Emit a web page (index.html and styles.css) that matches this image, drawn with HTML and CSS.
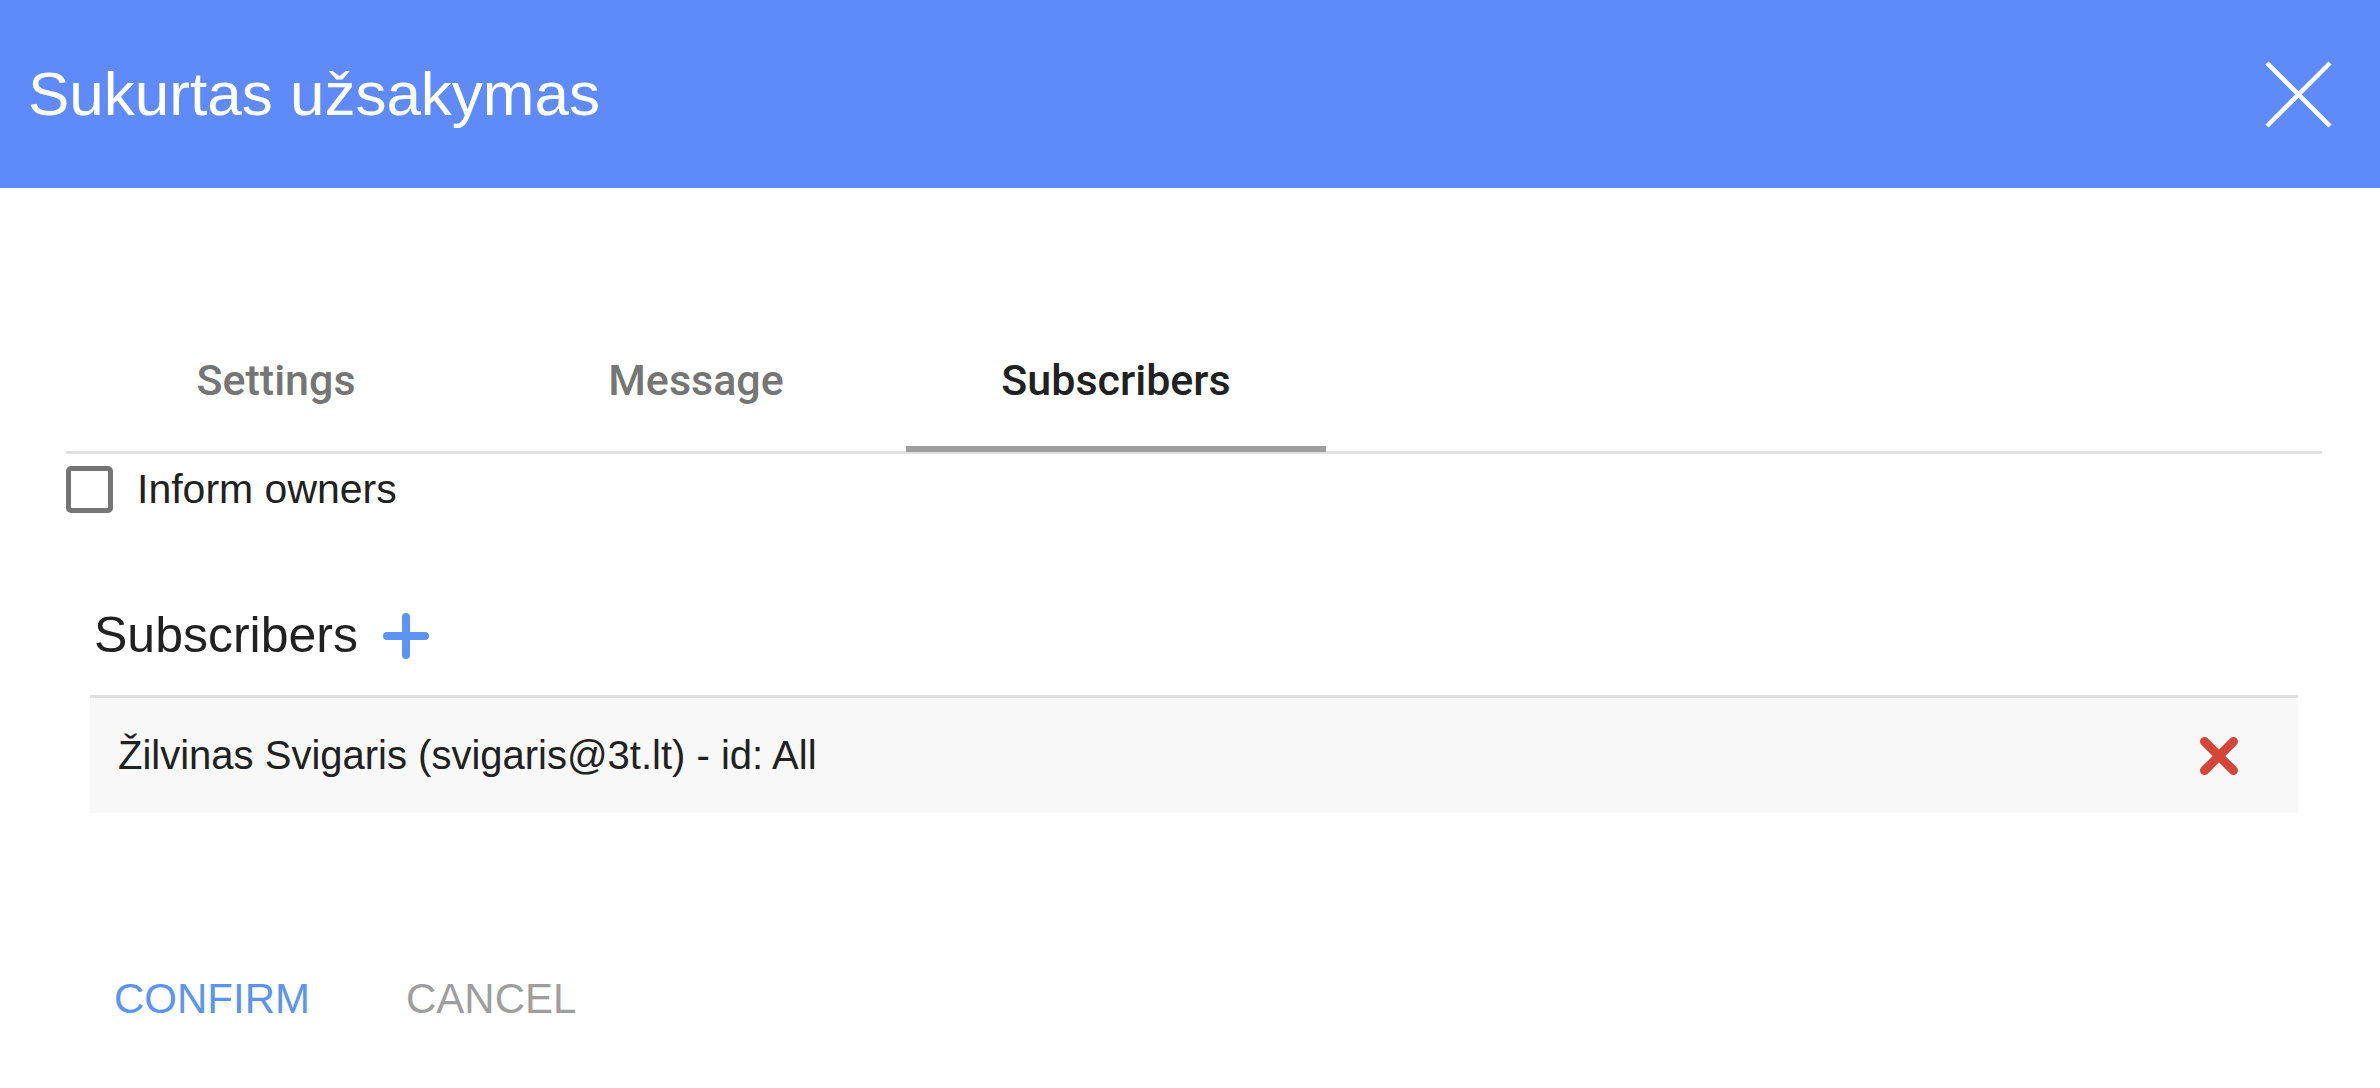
FILE: index.html
```html
<!DOCTYPE html>
<html lang="lt">
<head>
<meta charset="utf-8">
<title>Sukurtas užsakymas</title>
<link rel="stylesheet" href="styles.css">
</head>
<body>
<div class="modal">
  <header class="modal-header">
    <h1 class="modal-title">Sukurtas užsakymas</h1>
    <button class="close-btn" aria-label="Close">
      <svg width="67" height="67" viewBox="0 0 67 67"><path d="M2 2 L65 65 M65 2 L2 65" stroke="#fff" stroke-width="4.5" fill="none"/></svg>
    </button>
  </header>
  <main class="modal-body">
    <nav class="tabs">
      <div class="tab">Settings</div>
      <div class="tab">Message</div>
      <div class="tab active">Subscribers</div>
    </nav>
    <label class="check-row">
      <span class="checkbox"></span>
      <span class="check-label">Inform owners</span>
    </label>
    <section class="subs">
      <div class="subs-head">
        <span class="subs-title">Subscribers</span>
        <svg class="plus" width="46" height="46" viewBox="0 0 46 46"><path d="M23 4 V42 M4 23 H42" stroke="#5b94f1" stroke-width="8" stroke-linecap="round" fill="none"/></svg>
      </div>
      <div class="sub-row">
        <span class="sub-text">Žilvinas Svigaris (svigaris@3t.lt) - id: All</span>
        <svg class="remove" width="38" height="38" viewBox="0 0 38 38"><path d="M4.5 4.5 L33.5 33.5 M33.5 4.5 L4.5 33.5" stroke="#d44637" stroke-width="9" stroke-linecap="round" fill="none"/></svg>
      </div>
    </section>
    <div class="actions">
      <button class="btn btn-confirm">CONFIRM</button>
      <button class="btn btn-cancel">CANCEL</button>
    </div>
  </main>
</div>
</body>
</html>
```
FILE: styles.css
```css
html, body {
  margin: 0;
  padding: 0;
  background: #fff;
}
body {
  font-family: "Liberation Sans", Arial, Helvetica, sans-serif;
  color: #212121;
}
.modal-header {
  height: 188px;
  background: #5f8afa;
  display: flex;
  align-items: center;
  justify-content: space-between;
  padding: 0 48px 0 28px;
}
.modal-title {
  margin: 0;
  font-size: 62px;
  font-weight: normal;
  color: #fff;
  line-height: 1;
}
.close-btn {
  background: none;
  border: 0;
  padding: 0;
  display: flex;
}
.modal-body {
  padding: 0 58px 0 66px;
}
.tabs {
  margin-top: 163px;
  display: flex;
  border-bottom: 3px solid #e0e0e0;
}
.tab {
  width: 420px;
  text-align: center;
  font-family: "Roboto", "Liberation Sans", sans-serif;
  font-weight: 500;
  font-size: 43px;
  line-height: 50px;
  padding-top: 4px;
  padding-bottom: 46px;
  color: #757575;
  position: relative;
}
.tab.active {
  color: #212121;
}
.tab.active::after {
  content: "";
  position: absolute;
  left: 0;
  right: 0;
  bottom: -1px;
  height: 6px;
  background: #9e9e9e;
}
.check-row {
  display: flex;
  align-items: center;
  margin-top: 12px;
}
.checkbox {
  width: 37px;
  height: 37px;
  border: 5px solid #757575;
  border-radius: 5px;
}
.check-label {
  margin-left: 24px;
  font-size: 41px;
  color: #212121;
}
.subs {
  margin: 92px 24px 0 24px;
}
.subs-head {
  display: flex;
  align-items: center;
  height: 60px;
  padding-left: 4px;
}
.subs-title {
  font-size: 50px;
  line-height: 60px;
  color: #212121;
}
.plus {
  margin-left: 25px;
  margin-top: 2px;
}
.sub-row {
  margin-top: 30px;
  border-top: 3px solid #e0e0e0;
  background: #f8f8f8;
  height: 115px;
  display: flex;
  align-items: center;
  justify-content: space-between;
  padding: 0 60px 0 28px;
}
.sub-text {
  font-size: 40px;
  color: #212121;
}
.actions {
  margin-top: 150px;
  display: flex;
}
.btn {
  background: none;
  border: 0;
  font-family: "Liberation Sans", Arial, sans-serif;
  font-size: 42px;
  line-height: 72px;
  padding: 0 48px;
}
.btn-confirm {
  color: #5b94f1;
}
.btn-cancel {
  color: #9e9e9e;
}
```
